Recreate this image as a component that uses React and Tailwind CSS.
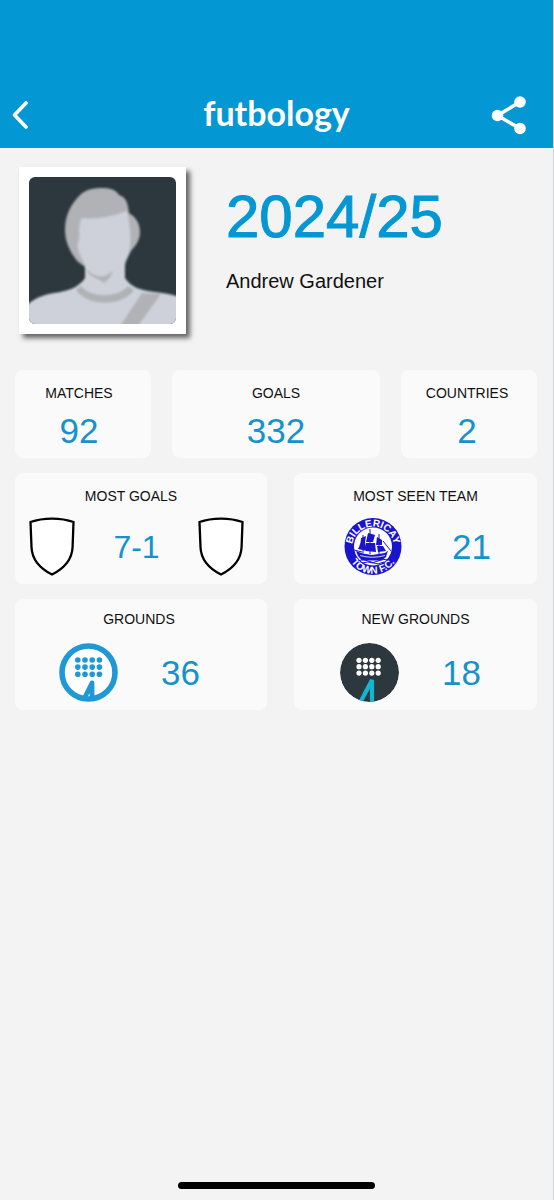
import React from 'react';

const SUMMARY = [
  { label: 'MATCHES', value: '92', align: 'pr-2' },
  { label: 'GOALS', value: '332', align: '' },
  { label: 'COUNTRIES', value: '2', align: 'pr-1' },
];

const DOT_ROWS = [0, 1, 2];
const DOT_COLS = [0, 1, 2, 3];

function BackIcon() {
  return (
    <svg className="w-4 h-7" viewBox="0 0 16 28" fill="none" aria-hidden="true">
      <path
        d="M14 2 2.500 14l11.500 12"
        stroke="white"
        strokeWidth="3.6"
        strokeLinecap="round"
        strokeLinejoin="round"
      />
    </svg>
  );
}

function ShareIcon() {
  return (
    <svg className="w-9 h-10" viewBox="0 0 36 40" fill="white" aria-hidden="true">
      <path d="M29 7 6.5 20.5 29 33.5" fill="none" stroke="white" strokeWidth="3.6" />
      <circle cx="29" cy="7" r="5.8" />
      <circle cx="6.5" cy="20.5" r="5.8" />
      <circle cx="29" cy="33.5" r="5.8" />
    </svg>
  );
}

function Avatar() {
  return (
    <svg
      className="w-[147px] h-[147px] rounded-md bg-[#2c383e]"
      viewBox="0 0 147 147"
      role="img"
      aria-label="Profile picture"
    >
      <defs>
        <filter id="soften">
          <feGaussianBlur stdDeviation="0.9" />
        </filter>
      </defs>
      <g filter="url(#soften)">
        {/* hair */}
        <path
          d="M48 84C42 76 36 66 36 53C36 38 42 27 51 18C57 12 65 11 74 11C82 11 87 13 90 18C97 20 99 26 100 36C107 40 111 47 111 55C111 64 106 69 102 74L97 84L56 90Z"
          fill="#b1b2b6"
        />
        {/* face, neck and shoulders */}
        <path
          d="M53 41C68 43 84 39 98 34C101 48 102 60 101 70C100 78 97 82 96 88V101C102 110 110 113 126 115C134 116 142 117 150 120V150H-3V129C5 121 14 118 25 116C40 114 50 110 56 101V88C52 80 48 74 49 66C52 58 48 50 53 41Z"
          fill="#ced1da"
        />
        <path d="M57 92C63 98 70 100 75 99C79 97 82 96 84 94C82 100 80 102 75 106C67 100 61 101 57 92Z" fill="#b1b2b6" />
        <path d="M47 113L52 109C61 121 89 121 99 109L105 113C94 130 58 130 47 113Z" fill="#b1b2b6" />
        <path d="M113 116L132 117L109 149H91Z" fill="#b1b2b6" />
      </g>
    </svg>
  );
}

function ShieldIcon() {
  return (
    <svg className="w-[46px] h-[59px] shrink-0" viewBox="0 0 46 59" aria-hidden="true">
      <path
        d="M1.5 5C14 0.4 32 0.4 44.5 5L43.6 30C43 43 34 52 23 57.5C12 52 3 43 2.5 30Z"
        fill="white"
        stroke="black"
        strokeWidth="2.3"
      />
    </svg>
  );
}

function ClubBadge() {
  return (
    <svg className="w-[58px] h-[59px] shrink-0" viewBox="0 0 58 59" role="img" aria-label="Billericay Town F.C.">
      <defs>
        <path id="badge-top" d="M11.7 42.5A21 21 0 1 1 46.3 42.500" />
        <path id="badge-bottom" d="M2 29.5A27 27 0 0 0 56 29.500" />
      </defs>
      <circle cx="29" cy="29.5" r="28.5" fill="#1a14cf" />
      <circle cx="29" cy="29.5" r="19" fill="white" />
      <g fill="white" className="font-['Liberation_Sans',Arial,sans-serif] font-bold">
        <text textAnchor="middle" className="text-[10px]">
          <textPath href="#badge-top" startOffset="50%">BILLERICAY</textPath>
        </text>
        <text textAnchor="middle" className="text-[10px]">
          <textPath href="#badge-bottom" startOffset="50%">TOWN F.C.</textPath>
        </text>
      </g>
      <g fill="#1a14cf">
        <path d="M12 34L19 36.500L28 38L41 36L44 33.500L42 40L38 43.500H18L14 39Z" />
        <path d="M17 21L22 19L21 25L23 34L14 32C16 28 17 25 17 21Z" />
        <path d="M24 16L31 18L29 25H22Z" />
        <path d="M22 26L31 26L32 35L22 34Z" />
        <path d="M33 20L38 23L38 28H32Z" />
        <path d="M33 29H39L42 34L34 35Z" />
      </g>
      <g fill="none" stroke="#1a14cf">
        <path d="M26 12V37M35 17V37M19 18V36M39 24L47 34M10 33L18 35" />
        <path d="M14 44Q19 41 24 44T34 44T44 43M18 46Q24 44 29 46T40 45" />
      </g>
      <path d="M16 38.5Q28 42 41 38.500" fill="none" stroke="white" strokeWidth="0.8" />
    </svg>
  );
}

function GroundsIcon() {
  return (
    <svg className="w-[59px] h-[59px] shrink-0" viewBox="0 0 59 59" aria-hidden="true">
      <circle cx="29.5" cy="29.5" r="26.5" fill="white" stroke="#1e98d7" strokeWidth="5.6" />
      {DOT_ROWS.map((row) =>
        DOT_COLS.map((col) => (
          <circle key={`${row}-${col}`} cx={18.8 + col * 7.2} cy={17 + row * 7.1} r="2.8" fill="#1e98d7" />
        ))
      )}
      <path d="M24.5 57L33 40V57" fill="none" stroke="#1e98d7" strokeWidth="4.8" strokeLinejoin="round" />
    </svg>
  );
}

function NewGroundsIcon() {
  return (
    <svg className="w-[59px] h-[59px] shrink-0 rounded-full" viewBox="0 0 59 59" aria-hidden="true">
      <circle cx="29.5" cy="29.5" r="29.5" fill="#2c383e" />
      {DOT_ROWS.map((row) =>
        DOT_COLS.map((col) => (
          <circle key={`${row}-${col}`} cx={19 + col * 6.4} cy={17.3 + row * 6.4} r="2.6" fill="white" />
        ))
      )}
      <path d="M20 60L32 37V60" fill="none" stroke="#12b6d2" strokeWidth="4.2" strokeLinejoin="bevel" />
    </svg>
  );
}

function Card({ className, children }) {
  return <section className={`bg-[#fafafa] rounded-lg ${className}`}>{children}</section>;
}

function Label({ className = '', children }) {
  return <h2 className={`text-sm leading-5 text-center text-[#111] ${className}`}>{children}</h2>;
}

function Value({ children }) {
  return <p className="text-[35px] leading-10 text-center text-[#1592cb]">{children}</p>;
}

function App() {
  return (
    <div className="min-h-screen flex flex-col bg-[#f3f3f3] border-r border-[#cfd3d6] font-['Liberation_Sans',Arial,sans-serif]">
      <header className="bg-[#0397d4] pt-[82px]">
        <div className="h-[66px] px-3 grid grid-cols-[1fr_auto_1fr] items-center">
          <button type="button" aria-label="Back" className="justify-self-start">
            <BackIcon />
          </button>
          <h1 className="pb-1 font-['Lato',sans-serif] font-bold text-[34px] leading-10 text-white">
            futbology
          </h1>
          <button type="button" aria-label="Share" className="justify-self-end mr-[14px]">
            <ShareIcon />
          </button>
        </div>
      </header>

      <main className="pl-[15px] pr-4 pt-[19px]">
        <div className="flex items-start pl-1">
          <div className="bg-white p-[10px] shadow-[4px_4px_5px_rgba(0,0,0,0.6)]">
            <Avatar />
          </div>
          <div className="pl-10 pt-5">
            <p className="text-[60px] leading-[60px] text-[#0397d4] [-webkit-text-stroke:1px_#0397d4]">2024/25</p>
            <p className="mt-[22px] text-xl leading-6 text-[#111]">Andrew Gardener</p>
          </div>
        </div>

        <div className="mt-9 grid grid-cols-[136fr_208fr_136fr] gap-[21px]">
          {SUMMARY.map((item) => (
            <Card key={item.label} className="pt-[13px] pb-[7px]">
              <Label className={item.align}>{item.label}</Label>
              <div className={`mt-2 ${item.align}`}>
                <Value>{item.value}</Value>
              </div>
            </Card>
          ))}
        </div>

        <div className="mt-[15px] grid grid-cols-[252fr_243fr] gap-[27px]">
          <Card className="pt-[13px] pb-2">
            <Label className="pr-5">MOST GOALS</Label>
            <div className="mt-[11px] pl-[14px] pr-[23px] flex items-center justify-between">
              <ShieldIcon />
              <p className="text-[32px] leading-10 text-[#1592cb]">7-1</p>
              <ShieldIcon />
            </div>
          </Card>
          <Card className="pt-[13px] pb-2">
            <Label>MOST SEEN TEAM</Label>
            <div className="mt-[11px] pl-[50px] flex items-center gap-[50px]">
              <ClubBadge />
              <Value>21</Value>
            </div>
          </Card>
        </div>

        <div className="mt-[15px] grid grid-cols-[252fr_243fr] gap-[27px]">
          <Card className="pt-[10px] pb-2">
            <Label className="pr-1">GROUNDS</Label>
            <div className="mt-[14px] pl-11 flex items-center gap-[43px]">
              <GroundsIcon />
              <Value>36</Value>
            </div>
          </Card>
          <Card className="pt-[10px] pb-2">
            <Label>NEW GROUNDS</Label>
            <div className="mt-[14px] pl-[46px] flex items-center gap-[43px]">
              <NewGroundsIcon />
              <Value>18</Value>
            </div>
          </Card>
        </div>
      </main>

      <div className="mt-auto mb-[11px] mx-auto w-[197px] h-[7px] rounded-full bg-black" />
    </div>
  );
}

export default App;
